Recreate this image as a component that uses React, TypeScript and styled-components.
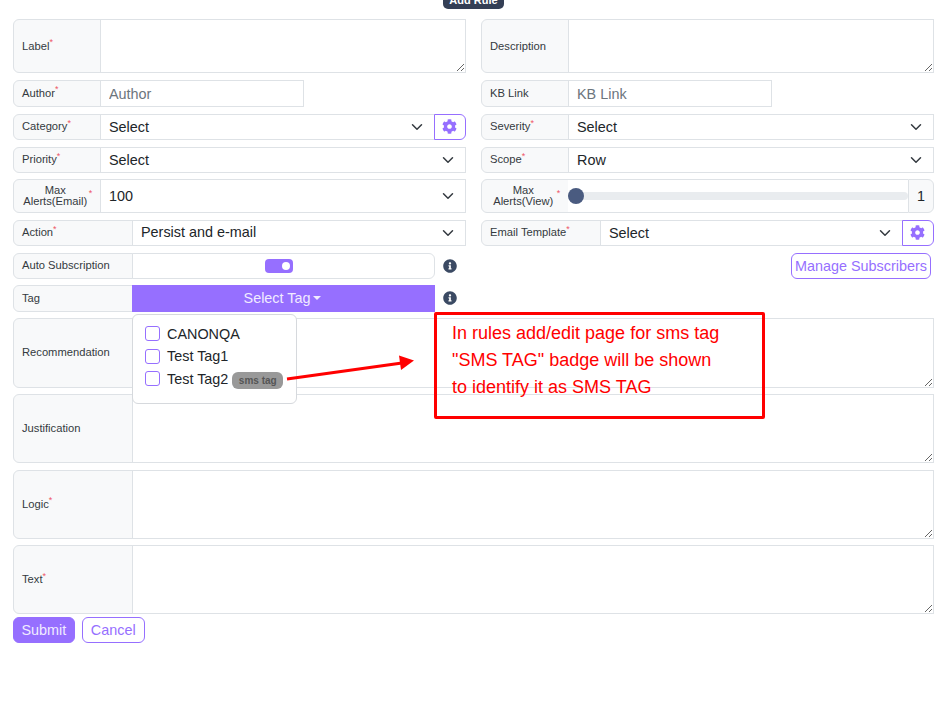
import React from 'react';
import styled, { createGlobalStyle } from 'styled-components';
import { FaCog, FaInfoCircle } from 'react-icons/fa';

const PURPLE = '#966fff';
const BORDER = '#dee2e6';
const CHEVRON =
  "url(\"data:image/svg+xml,%3csvg xmlns='http://www.w3.org/2000/svg' viewBox='0 0 16 16'%3e%3cpath fill='none' stroke='%23343a40' stroke-linecap='round' stroke-linejoin='round' stroke-width='2' d='m2 5 6 6 6-6'/%3e%3c/svg%3e\")";

const GlobalStyle = createGlobalStyle`
  html, body {
    margin: 0;
    padding: 0;
    background: #fff;
    font-family: "Liberation Sans", Arial, sans-serif;
    color: #212529;
  }
`;

const Page = styled.div`
  position: relative;
  width: 950px;
  height: 706px;
  overflow: hidden;
  box-sizing: border-box;
  padding: 19px 16px 0 13px;
`;

const AddRuleBadge = styled.div`
  position: absolute;
  left: 443px;
  top: -9px;
  width: 61px;
  height: 18px;
  border-radius: 5px;
  background: #343f55;
  color: #fff;
  font-size: 11px;
  font-weight: 700;
  display: flex;
  align-items: center;
  justify-content: center;
`;

const Form = styled.form`
  display: flex;
  flex-direction: column;
  gap: 6.5px;
  margin: 0;
`;

const TwoColumns = styled.div`
  display: grid;
  grid-template-columns: 453px 453px;
  column-gap: 15px;
`;

const Group = styled.div<{ $height: number; $width?: number; $roundRight?: boolean }>`
  display: flex;
  height: ${(p) => p.$height}px;
  width: ${(p) => (p.$width ? `${p.$width}px` : 'auto')};
  box-sizing: border-box;
  position: relative;
  border-radius: ${(p) => (p.$roundRight ? '6px' : '6px 0 0 6px')};
`;

const Label = styled.div<{ $wide?: boolean; $centered?: boolean }>`
  flex: 0 0 ${(p) => (p.$wide ? 120 : 88)}px;
  box-sizing: border-box;
  display: flex;
  align-items: center;
  justify-content: ${(p) => (p.$centered ? 'center' : 'flex-start')};
  padding: ${(p) => (p.$centered ? '0 6px' : '0 4px 0 8px')};
  background: #f8f9fa;
  border: 1px solid ${BORDER};
  border-radius: 6px 0 0 6px;
  font-size: 11.2px;
  line-height: 11px;
  color: #343a40;
`;

const CenteredText = styled.span`
  text-align: center;
  flex: 0 0 67px;
`;

const Required = styled.sup`
  color: #ee5566;
  font-size: 9px;
  line-height: 0;
  position: relative;
  top: -4px;
  vertical-align: super;
`;

const CenteredRequired = styled(Required)`
  align-self: center;
  top: -3px;
`;

const TextArea = styled.textarea`
  flex: 1;
  min-width: 0;
  box-sizing: border-box;
  margin: 0 0 0 -1px;
  border: 1px solid ${BORDER};
  resize: vertical;
  outline: none;
  font: 14.4px "Liberation Sans", sans-serif;
  background: transparent;
`;

const TextInput = styled.input`
  flex: 1;
  min-width: 0;
  box-sizing: border-box;
  margin: 0 0 0 -1px;
  padding: 2px 8px 0;
  border: 1px solid ${BORDER};
  outline: none;
  font: 14.4px "Liberation Sans", sans-serif;
  color: #212529;
  background: #fff;

  &::placeholder {
    color: #6c757d;
    opacity: 1;
  }
`;

const Select = styled.select`
  flex: 1;
  min-width: 0;
  box-sizing: border-box;
  margin: 0 0 0 -1px;
  padding: 0 8px;
  border: 1px solid ${BORDER};
  border-radius: 0;
  outline: none;
  appearance: none;
  font: 14.4px "Liberation Sans", sans-serif;
  color: #212529;
  background: #fff ${CHEVRON} no-repeat right 9px center / 16px 12px;
`;

const ActionSelect = styled(Select)`
  padding-bottom: 2px;
`;

const GearButton = styled.button`
  flex: 0 0 32px;
  box-sizing: border-box;
  margin: 0 0 0 -1px;
  padding: 0 1px 0 0;
  border: 1px solid ${PURPLE};
  border-radius: 0 6px 6px 0;
  background: #fff;
  color: ${PURPLE};
  font-size: 15px;
  display: flex;
  align-items: center;
  justify-content: center;
`;

const SliderCell = styled.div`
  flex: 1;
  margin-left: -1px;
  border-top: 1px solid ${BORDER};
  border-bottom: 1px solid ${BORDER};
  display: flex;
  align-items: center;
  background: #fff;
`;

const SliderTrack = styled.div`
  flex: 1;
  height: 8px;
  border-radius: 4px;
  background: #e9ecef;
  display: flex;
  align-items: center;
`;

const SliderThumb = styled.div`
  width: 16px;
  height: 16px;
  border-radius: 50%;
  background: #4a5b80;
`;

const SliderValue = styled.div`
  flex: 0 0 26px;
  box-sizing: border-box;
  border: 1px solid ${BORDER};
  border-radius: 0 6px 6px 0;
  background: #f8f9fa;
  font-size: 14.4px;
  display: flex;
  align-items: center;
  justify-content: center;
`;

const InfoRow = styled.div`
  display: flex;
  align-items: center;
`;

const InfoIcon = styled(FaInfoCircle)`
  color: #3b4a63;
  font-size: 14px;
  margin-left: 8px;
`;

const SwitchCell = styled.div`
  flex: 1;
  margin-left: -1px;
  padding-right: 10px;
  border: 1px solid ${BORDER};
  border-radius: 0 6px 6px 0;
  display: flex;
  align-items: center;
  justify-content: center;
`;

const Switch = styled.div`
  width: 28px;
  height: 14px;
  border-radius: 4px;
  background: ${PURPLE};
  display: flex;
  align-items: center;
  justify-content: flex-end;
  padding-right: 3px;
  box-sizing: border-box;
`;

const SwitchKnob = styled.div`
  width: 8px;
  height: 8px;
  border-radius: 50%;
  background: #fff;
`;

const RightAligned = styled.div`
  display: flex;
  justify-content: flex-end;
  padding-right: 3px;
`;

const OutlineButton = styled.button`
  box-sizing: border-box;
  height: 26px;
  padding: 0 3px;
  border: 1px solid ${PURPLE};
  border-radius: 6px;
  background: #fff;
  color: ${PURPLE};
  font: 14.4px "Liberation Sans", sans-serif;
`;

const SolidButton = styled(OutlineButton)`
  background: ${PURPLE};
  color: #f1ebff;
  padding: 0 7.5px;
`;

const CancelButton = styled(OutlineButton)`
  padding: 0 8px;
`;

const TagToggle = styled.button`
  flex: 1;
  margin: 0 0 0 -1px;
  padding: 0 2px 0 0;
  border: 0;
  background: ${PURPLE};
  color: #f1ebff;
  font: 14.4px "Liberation Sans", sans-serif;
`;

const Caret = styled.span`
  display: inline-block;
  margin-left: 3px;
  vertical-align: 3px;
  border-top: 4px solid;
  border-left: 4px solid transparent;
  border-right: 4px solid transparent;
`;

const TagMenu = styled.div`
  position: absolute;
  left: 119px;
  top: 29px;
  width: 165px;
  height: 90px;
  box-sizing: border-box;
  z-index: 2;
  padding: 10px 12px;
  background: #fff;
  border: 1px solid #d6d9dd;
  border-radius: 6px;
  display: flex;
  flex-direction: column;
  gap: 5.5px;
`;

const TagOption = styled.label`
  display: flex;
  align-items: center;
  height: 17px;
  font-size: 14.4px;
  color: #212529;
  white-space: nowrap;
`;

const TagCheck = styled.span`
  width: 15px;
  height: 15px;
  box-sizing: border-box;
  margin-right: 7px;
  border: 1px solid ${PURPLE};
  border-radius: 3px;
  background: #fff;
`;

const SmsBadge = styled.span`
  margin: 3px 0 0 4px;
  padding: 0 6.5px;
  height: 17px;
  border-radius: 6px;
  background: #999;
  color: #555;
  font-size: 10px;
  font-weight: 700;
  display: flex;
  align-items: center;
`;

const Actions = styled.div`
  display: flex;
  gap: 7px;
  margin-top: -3.5px;
`;

const Callout = styled.div`
  position: absolute;
  left: 434px;
  top: 312px;
  width: 331px;
  height: 107px;
  box-sizing: border-box;
  z-index: 3;
  padding: 5px 0 0 15px;
  border: 3px solid #f00;
  border-radius: 2px;
  color: #f00;
  font-size: 18px;
  line-height: 27px;
  white-space: nowrap;
`;

const CalloutArrow = styled.svg`
  position: absolute;
  left: 280px;
  top: 350px;
  z-index: 3;
`;

const Req = () => <Required>*</Required>;

export default function App() {
  return (
    <Page>
      <GlobalStyle />
      <AddRuleBadge>Add Rule</AddRuleBadge>
      <Form>
        <TwoColumns>
          <Group $height={54}>
            <Label>Label<Req /></Label>
            <TextArea />
          </Group>
          <Group $height={54}>
            <Label>Description</Label>
            <TextArea />
          </Group>
        </TwoColumns>
        <TwoColumns>
          <Group $height={27.5} $width={291}>
            <Label>Author<Req /></Label>
            <TextInput placeholder="Author" />
          </Group>
          <Group $height={27.5} $width={291}>
            <Label>KB Link</Label>
            <TextInput placeholder="KB Link" />
          </Group>
        </TwoColumns>
        <TwoColumns>
          <Group $height={26.5} $roundRight>
            <Label>Category<Req /></Label>
            <Select defaultValue="Select"><option>Select</option></Select>
            <GearButton type="button"><FaCog /></GearButton>
          </Group>
          <Group $height={26.5}>
            <Label>Severity<Req /></Label>
            <Select defaultValue="Select"><option>Select</option></Select>
          </Group>
        </TwoColumns>
        <TwoColumns>
          <Group $height={26}>
            <Label>Priority<Req /></Label>
            <Select defaultValue="Select"><option>Select</option></Select>
          </Group>
          <Group $height={26}>
            <Label>Scope<Req /></Label>
            <Select defaultValue="Row"><option>Row</option></Select>
          </Group>
        </TwoColumns>
        <TwoColumns>
          <Group $height={34}>
            <Label $centered>
              <CenteredText>Max Alerts(Email)</CenteredText>
              <CenteredRequired>*</CenteredRequired>
            </Label>
            <Select defaultValue="100"><option>100</option></Select>
          </Group>
          <Group $height={34} $roundRight>
            <Label $centered>
              <CenteredText>Max Alerts(View)</CenteredText>
              <CenteredRequired>*</CenteredRequired>
            </Label>
            <SliderCell>
              <SliderTrack><SliderThumb /></SliderTrack>
            </SliderCell>
            <SliderValue>1</SliderValue>
          </Group>
        </TwoColumns>
        <TwoColumns>
          <Group $height={26.5}>
            <Label $wide>Action<Req /></Label>
            <ActionSelect defaultValue="Persist and e-mail"><option>Persist and e-mail</option></ActionSelect>
          </Group>
          <Group $height={26.5} $roundRight>
            <Label $wide>Email Template<Req /></Label>
            <Select defaultValue="Select"><option>Select</option></Select>
            <GearButton type="button"><FaCog /></GearButton>
          </Group>
        </TwoColumns>
        <TwoColumns>
          <InfoRow>
            <Group $height={26} $width={422} $roundRight>
              <Label $wide>Auto Subscription</Label>
              <SwitchCell>
                <Switch><SwitchKnob /></Switch>
              </SwitchCell>
            </Group>
            <InfoIcon />
          </InfoRow>
          <RightAligned>
            <OutlineButton type="button">Manage Subscribers</OutlineButton>
          </RightAligned>
        </TwoColumns>
        <TwoColumns>
          <InfoRow>
            <Group $height={26.5} $width={422}>
              <Label $wide>Tag</Label>
              <TagToggle type="button">Select Tag<Caret /></TagToggle>
              <TagMenu>
                <TagOption><TagCheck />CANONQA</TagOption>
                <TagOption><TagCheck />Test Tag1</TagOption>
                <TagOption><TagCheck />Test Tag2<SmsBadge>sms tag</SmsBadge></TagOption>
              </TagMenu>
            </Group>
            <InfoIcon />
          </InfoRow>
        </TwoColumns>
        <Group $height={69.5}>
          <Label $wide>Recommendation</Label>
          <TextArea />
        </Group>
        <Group $height={69}>
          <Label $wide>Justification</Label>
          <TextArea />
        </Group>
        <Group $height={69}>
          <Label $wide>Logic<Req /></Label>
          <TextArea />
        </Group>
        <Group $height={69}>
          <Label $wide>Text<Req /></Label>
          <TextArea />
        </Group>
        <Actions>
          <SolidButton type="button">Submit</SolidButton>
          <CancelButton type="button">Cancel</CancelButton>
        </Actions>
      </Form>
      <CalloutArrow width="140" height="34" viewBox="0 0 140 34">
        <line x1="7" y1="29" x2="122" y2="13" stroke="#f00" strokeWidth="3" />
        <polygon points="134,10.5 119,5.5 121,20" fill="#f00" />
      </CalloutArrow>
      <Callout>
        In rules add/edit page for sms tag
        <br />
        "SMS TAG" badge will be shown
        <br />
        to identify it as SMS TAG
      </Callout>
    </Page>
  );
}
